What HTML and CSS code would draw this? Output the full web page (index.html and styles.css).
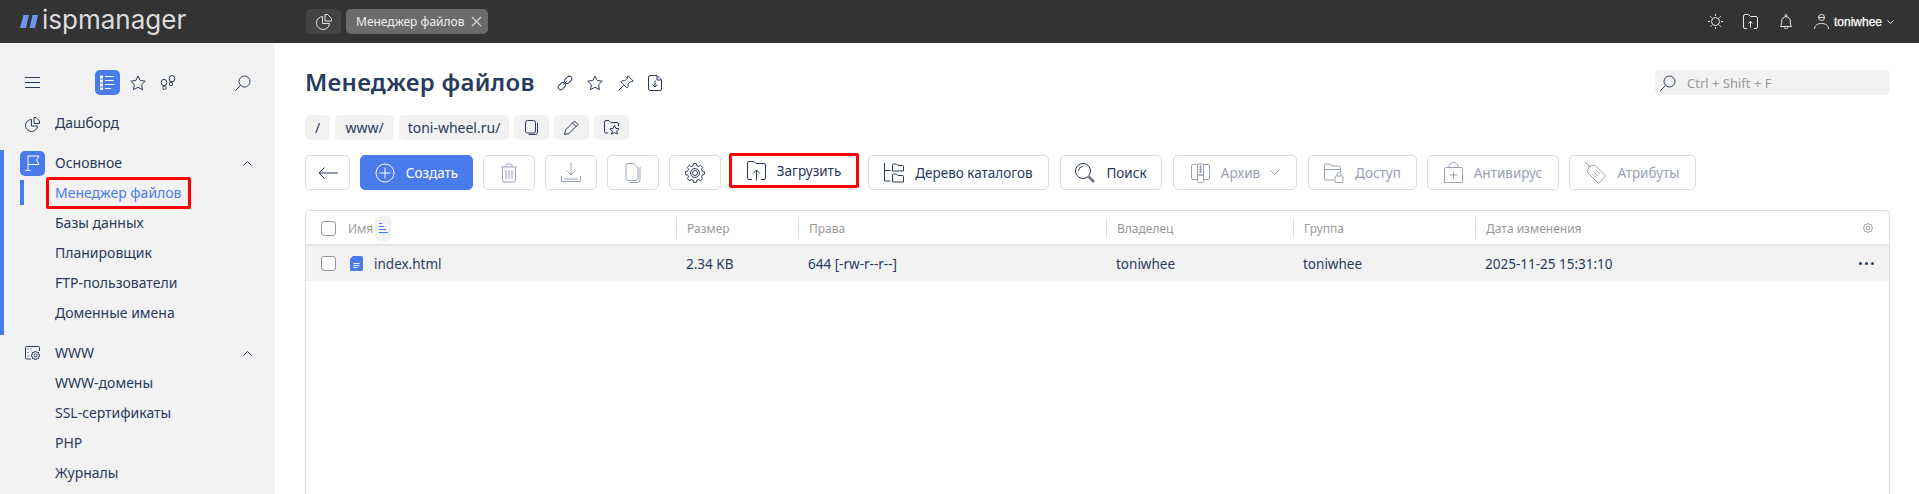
FILE: index.html
```html
<!DOCTYPE html>
<html lang="ru">
<head>
<meta charset="utf-8">
<title>ispmanager</title>
<link rel="stylesheet" href="styles.css">
</head>
<body>
<svg class="sprite" width="0" height="0">
  <symbol id="cog" viewBox="-10 -10 20 20"><path d="M-1.94-7.24L-1.49-9.38H1.49L1.94-7.24L3.75-6.49L5.58-7.69L7.69-5.58L6.49-3.75L7.24-1.94L9.38-1.49V1.49L7.24 1.94L6.49 3.75L7.69 5.58L5.58 7.69L3.75 6.49L1.94 7.24L1.49 9.38H-1.49L-1.94 7.24L-3.75 6.49L-5.58 7.69L-7.69 5.58L-6.49 3.75L-7.24 1.94L-9.38 1.49V-1.49L-7.24-1.94L-6.49-3.75L-7.69-5.58L-5.58-7.69L-3.75-6.49z" stroke-linejoin="round"/><circle r="4.500"/><circle r="2.500"/></symbol>
  <symbol id="cog-small" viewBox="-10 -10 20 20"><path d="M-1.94-7.24L-1.49-9.38H1.49L1.94-7.24L3.75-6.49L5.58-7.69L7.69-5.58L6.49-3.75L7.24-1.94L9.38-1.49V1.49L7.24 1.94L6.49 3.75L7.69 5.58L5.58 7.69L3.75 6.49L1.94 7.24L1.49 9.38H-1.49L-1.94 7.24L-3.75 6.49L-5.58 7.69L-7.69 5.58L-6.49 3.75L-7.24 1.94L-9.38 1.49V-1.49L-7.24-1.94L-6.49-3.75L-7.69-5.58L-5.58-7.69L-3.75-6.49z" stroke-linejoin="round"/><circle r="3.500"/></symbol>
</svg>
<header class="topbar">
  <div class="logo">
    <svg width="18" height="13" viewBox="0 0 18 13"><path d="M3.500 0H9L6 13H0zM12.500 0H18L15 13H9.500z" fill="#6d94f0"/></svg>
    <span class="logo-text">ispmanager</span>
  </div>
  <div class="tabs">
    <span class="tab-icon"><svg width="16" height="16" viewBox="0 0 16 16" fill="none" stroke="#e8e8e8"><path d="M6.500 2.500a6.500 6.500 0 1 0 7 7H6.500z"/><path d="M9 .5h2.500l4 4v2.500H9z"/></svg></span>
    <span class="tab">Менеджер файлов <svg width="11" height="11" viewBox="0 0 11 11" stroke="#d8d8d8" stroke-width="1.100"><path d="M1 1l9 9M10 1l-9 9"/></svg></span>
  </div>
  <div class="top-actions">
    <svg class="sun" width="15" height="15" viewBox="0 0 15 15" fill="none" stroke="#e8e8e8"><circle cx="7.500" cy="7.500" r="4"/><path d="M7.500 0v2M7.500 13v2M0 7.500h2M13 7.500h2M2.200 2.200l1.400 1.400M11.400 11.400l1.400 1.400M12.800 2.200l-1.400 1.400M3.600 11.400l-1.400 1.400"/></svg>
    <svg width="15" height="15" viewBox="0 0 15 15" fill="none" stroke="#e8e8e8"><path d="M4 14.500H2A1.500 1.500 0 0 1 .5 13V2A1.500 1.500 0 0 1 2 .5h3.500l2 2H13A1.500 1.500 0 0 1 14.500 4v9a1.500 1.500 0 0 1-1.500 1.500h-2"/><path d="M7.500 13.500V7.500M5.500 9.500l2-2 2 2"/></svg>
    <svg width="12" height="15" viewBox="0 0 12 15" fill="none" stroke="#e8e8e8"><path d="M.5 12.500c1-1.500 1.200-3 1.200-5.500a4.300 4.300 0 0 1 8.600 0c0 2.500.2 4 1.200 5.500z"/><circle cx="6" cy="1.500" r="1"/><path d="M4.500 13.500a1.500 1.500 0 0 0 3 0"/></svg>
    <div class="user">
      <svg width="15" height="15" viewBox="0 0 15 15" fill="none" stroke="#e8e8e8"><circle cx="7.500" cy="3.500" r="3"/><path d="M4.500 3.500h6M.5 15c.3-3.800 3-5.500 7-5.500s6.700 1.700 7 5.500"/></svg>
      <span class="user-name">toniwhee</span>
      <svg width="7" height="4" viewBox="0 0 7 4" fill="none" stroke="#e8e8e8"><path d="M.5.500L3.500 3.500 6.500.500"/></svg>
    </div>
  </div>
</header>

<div class="layout">
  <aside class="sidebar">
    <div class="side-tools">
      <svg width="15" height="11" viewBox="0 0 15 11" stroke="#2a3a5c"><path d="M0 .5h15M0 5.500h15M0 10.500h15"/></svg>
      <span class="tool-active"><svg width="15" height="15" viewBox="0 0 15 15" fill="none" stroke="#fff"><path d="M5 1.500h9M5 5.500h9M5 9.500h9.500M5 13.500h6"/><rect x=".5" y="1" width="2" height="2"/><rect x=".5" y="5" width="2" height="2"/><rect x=".5" y="9" width="2" height="2"/><rect x=".5" y="13" width="2" height="1.500"/></svg></span>
      <svg class="tool-star" width="16" height="15" viewBox="0 0 16 15" fill="none" stroke="#2a3a5c"><path d="M8 1l2.200 4.500 5 .7-3.600 3.500.9 5L8 12.300 3.500 14.700l.9-5L.8 6.200l5-.7z"/></svg>
      <svg class="tool-steps" width="16" height="15" viewBox="0 0 16 15" fill="none" stroke="#2a3a5c"><ellipse cx="4" cy="7.500" rx="2.800" ry="3.200"/><ellipse cx="4.500" cy="12.800" rx="1.700" ry="1.700"/><ellipse cx="12" cy="3.700" rx="2.800" ry="3.200"/><ellipse cx="11" cy="9" rx="1.700" ry="1.700"/></svg>
      <svg class="tool-search" width="16" height="16" viewBox="0 0 16 16" fill="none" stroke="#2a3a5c"><circle cx="9.500" cy="6.500" r="5.500"/><path d="M5.500 10.500L.5 15.500"/></svg>
    </div>
    <a class="nav-head nav-dash">
      <span class="nav-ico"><svg width="15" height="15" viewBox="0 0 15 15" fill="none" stroke="#2a3a5c"><path d="M6.500 2.500a6 6 0 1 0 6 6.500H6.500z"/><path d="M9 .5h2l3.500 3.500v2.500H9z"/></svg></span>
      <span class="nav-label">Дашборд</span>
    </a>
    <section class="nav-group is-open">
      <a class="nav-head">
        <span class="nav-ico nav-ico-on"><svg width="15" height="16" viewBox="0 0 15 16" fill="none" stroke="#fff"><path d="M3 15.500V.5M.5 15.500h5M3 1h11l-2.500 4L14 9.500H3"/></svg></span>
        <span class="nav-label">Основное</span>
        <svg class="chev" width="9" height="5" viewBox="0 0 9 5" fill="none" stroke="#2a3a5c"><path d="M.5 4.500l4-4 4 4"/></svg>
      </a>
      <a class="nav-item nav-current"><span class="nav-label">Менеджер файлов</span></a>
      <a class="nav-item"><span class="nav-label">Базы данных</span></a>
      <a class="nav-item"><span class="nav-label">Планировщик</span></a>
      <a class="nav-item"><span class="nav-label">FTP-пользователи</span></a>
      <a class="nav-item"><span class="nav-label">Доменные имена</span></a>
    </section>
    <section class="nav-group">
      <a class="nav-head">
        <span class="nav-ico"><svg width="15" height="14" viewBox="0 0 15 14" fill="none" stroke="#2a3a5c"><path d="M6 13H1.500A1 1 0 0 1 .5 12V1.500a1 1 0 0 1 1-1h12a1 1 0 0 1 1 1V5M2.500 3h1M5.500 3h1M2.500 6.500h1M2.500 10h1"/><svg x="6" y="5" width="9" height="9" stroke-width="2.200"><use href="#cog-small"/></svg></svg></span>
        <span class="nav-label">WWW</span>
        <svg class="chev" width="9" height="5" viewBox="0 0 9 5" fill="none" stroke="#2a3a5c"><path d="M.5 4.500l4-4 4 4"/></svg>
      </a>
      <a class="nav-item"><span class="nav-label">WWW-домены</span></a>
      <a class="nav-item"><span class="nav-label">SSL-сертификаты</span></a>
      <a class="nav-item"><span class="nav-label">PHP</span></a>
      <a class="nav-item"><span class="nav-label">Журналы</span></a>
    </section>
  </aside>

  <main class="content">
    <div class="title-row">
      <h1>Менеджер файлов</h1>
      <div class="title-tools">
        <svg width="16" height="16" viewBox="0 0 16 16" fill="none" stroke="#2a3a5c"><rect x="-.5" y="5.500" width="8" height="5" rx="2.500" transform="rotate(-45 8 8)"/><rect x="8.500" y="5.500" width="8" height="5" rx="2.500" transform="rotate(-45 8 8)"/><path d="M6.500 9.500l3-3"/></svg>
        <svg width="16" height="15" viewBox="0 0 16 15" fill="none" stroke="#2a3a5c"><path d="M8 1l2.200 4.500 5 .7-3.600 3.500.9 5L8 12.300 3.500 14.700l.9-5L.8 6.200l5-.7z"/></svg>
        <svg width="16" height="16" viewBox="0 0 16 16" fill="none" stroke="#2a3a5c"><path d="M10 .8l5.200 5.200-1.500.8-1-.3-2.700 2.700.2 2.500-1.200 1.200-6-6 1.200-1.200 2.500.2 2.700-2.700-.3-1zM5.500 10.500l-5 5"/></svg>
        <svg width="14" height="16" viewBox="0 0 14 16" fill="none" stroke="#2a3a5c"><path d="M9 .5H2A1.500 1.500 0 0 0 .5 2v12A1.500 1.500 0 0 0 2 15.500h10a1.500 1.500 0 0 0 1.500-1.500V5zM9 .5V5h4.500M7 5.500v6.500M4.500 9.500L7 12l2.500-2.500"/></svg>
      </div>
      <div class="quick-search">
        <svg width="16" height="16" viewBox="0 0 16 16" fill="none" stroke="#2a3a5c"><circle cx="9.500" cy="6.500" r="5.500"/><path d="M5.500 10.500L.5 15.500"/></svg>
        <span>Ctrl + Shift + F</span>
      </div>
    </div>

    <div class="crumbs">
      <span class="crumb crumb-root">/</span>
      <span class="crumb crumb-www">www/</span>
      <span class="crumb crumb-site">toni-wheel.ru/</span>
      <span class="crumb crumb-ico"><svg width="14" height="15" viewBox="0 0 14 15" fill="none" stroke="#2a3a5c"><rect x=".5" y=".5" width="10" height="12.500" rx="2"/><path d="M12.500 2.500v9.500a2.500 2.500 0 0 1-2.500 2.500H3.500"/></svg></span>
      <span class="crumb crumb-ico"><svg width="15" height="15" viewBox="0 0 15 15" fill="none" stroke="#2a3a5c"><path d="M10.500 1l3.500 3.500-9 9-4.500 1 1-4.500zM8.500 3l3.500 3.500"/></svg></span>
      <span class="crumb crumb-ico"><svg width="16" height="15" viewBox="0 0 16 15" fill="none" stroke="#2a3a5c"><path d="M4 13H2A1.500 1.500 0 0 1 .5 11.500V2A1.500 1.500 0 0 1 2 .5h3L7 2.500h6A1.500 1.500 0 0 1 14.500 4v2"/><path d="M10.500 5.500l1.400 2.900 3.100.4-2.300 2.200.6 3.100-2.800-1.500-2.800 1.500.6-3.100L6 8.800l3.100-.4z"/></svg></span>
    </div>

    <div class="toolbar">
      <button class="btn btn-back"><svg width="20" height="12" viewBox="0 0 20 12" fill="none" stroke="#2a3a5c"><path d="M20 6H1M6.500.5L1 6l5.500 5.500"/></svg></button>
      <button class="btn btn-primary"><svg width="20" height="20" viewBox="0 0 20 20" fill="none" stroke="#fff"><circle cx="10" cy="10" r="9"/><path d="M10 4.500v11M4.500 10h11"/></svg><span>Создать</span></button>
      <button class="btn btn-ico btn-off"><svg width="16" height="20" viewBox="0 0 16 20" fill="none" stroke="#9aa1b5"><path d="M0 4h16M5 4V2.500A1.500 1.500 0 0 1 6.500 1h3A1.500 1.500 0 0 1 11 2.500V4M1.500 4.500v13A1.500 1.500 0 0 0 3 19h10a1.500 1.500 0 0 0 1.500-1.500v-13M5 7v9M8 7v9M11 7v9"/></svg></button>
      <button class="btn btn-ico btn-off"><svg width="20" height="20" viewBox="0 0 20 20" fill="none" stroke="#9aa1b5"><path d="M10 0v12M6 8l4 4 4-4M.5 13v5.500h19V13M3 16h14"/></svg></button>
      <button class="btn btn-ico btn-off"><svg width="16" height="20" viewBox="0 0 16 20" fill="none" stroke="#9aa1b5"><path d="M9 .5H3A2 2 0 0 0 1 2.500v13a2 2 0 0 0 2 2h8a2 2 0 0 0 2-2V5zM15 4v13a2.500 2.500 0 0 1-2.500 2.500H4"/></svg></button>
      <button class="btn btn-ico"><svg width="20" height="20" fill="none" stroke="#2a3a5c"><use href="#cog"/></svg></button>
      <button class="btn btn-upload"><svg width="19" height="20" viewBox="0 0 19 20" fill="none" stroke="#2a3a5c"><path d="M5 18.500H2A1.500 1.500 0 0 1 .5 17V2A1.500 1.500 0 0 1 2 .5h5l2 2h8A1.500 1.500 0 0 1 18.500 4v13a1.500 1.500 0 0 1-1.500 1.500h-3M9.500 19.500V9M6 12.500L9.500 9l3.500 3.500"/></svg><span>Загрузить</span></button>
      <button class="btn btn-tree"><svg width="20" height="20" viewBox="0 0 20 20" fill="none" stroke="#2a3a5c"><path d="M.5 0v18h6M.5 7.500h6"/><path d="M8.500 8V2a1 1 0 0 1 1-1h3l1.500 1.500h4.500a1 1 0 0 1 1 1V8zM8.500 19v-7a1 1 0 0 1 1-1h3l1.500 1.500h4.500a1 1 0 0 1 1 1V19z"/></svg><span>Дерево каталогов</span></button>
      <button class="btn btn-find"><svg width="20" height="20" viewBox="0 0 20 20" fill="none" stroke="#2a3a5c"><circle cx="8" cy="8" r="7.500"/><path d="M3.500 8a4.500 4.500 0 0 1 4.500-4.500"/><path d="M13.500 13.500l5.500 5.500" stroke="#6d7487" stroke-width="2.500"/></svg><span>Поиск</span></button>
      <button class="btn btn-arch btn-off"><svg width="19" height="20" viewBox="0 0 19 20" fill="none" stroke="#9aa1b5"><path d="M5 1.500H2A1.500 1.500 0 0 0 .5 3v12A1.500 1.500 0 0 0 2 16.500h4M13 1.500h4A1.500 1.500 0 0 1 18.500 3v12a1.500 1.500 0 0 1-1.500 1.500h-4M6.500 1h6v11h-6zM9.500 2v8M8 4h3M8 6.500h3M8 9h3"/><rect x="6.500" y="12" width="6" height="7.500" rx="1"/></svg><span>Архив</span><svg class="btn-chev" width="9" height="5" viewBox="0 0 9 5" fill="none" stroke="#9aa1b5"><path d="M.5.5l4 4 4-4"/></svg></button>
      <button class="btn btn-acc btn-off"><svg width="20" height="20" viewBox="0 0 20 20" fill="none" stroke="#9aa1b5"><path d="M10 17H2A1.500 1.500 0 0 1 .5 15.500V2.500A1.500 1.500 0 0 1 2 1h4l2 2h7a1.500 1.500 0 0 1 1.500 1.500V9M.5 6.500h16"/><rect x="11" y="13" width="8" height="6.500" rx="1"/><path d="M13 13v-1.500a2 2 0 0 1 4 0V13"/></svg><span>Доступ</span></button>
      <button class="btn btn-virus btn-off"><svg width="19" height="21" viewBox="0 0 19 21" fill="none" stroke="#9aa1b5"><path d="M1.500 5.500h16a1 1 0 0 1 1 1V20.500H.5V6.500a1 1 0 0 1 1-1zM5 5.500V4.500a4.500 4 0 0 1 9 0v1M9.500 9.500v7M6 13h7"/></svg><span>Антивирус</span></button>
      <button class="btn btn-attr btn-off"><svg width="21" height="22" viewBox="0 0 21 22" fill="none" stroke="#9aa1b5"><path d="M0 0l6 5.500M3.500 4.500l6-1.500 11 11-7 7.500L2.500 10.500z"/><path d="M9 10l4 4M11 8l4 4M7.500 12l3.500 3.500"/></svg><span>Атрибуты</span></button>
    </div>

    <div class="table">
      <div class="t-row t-head">
        <div class="cell c-name">
          <span class="check"></span>
          <span class="head-text">Имя</span>
          <span class="sort"><svg width="9" height="11" viewBox="0 0 9 11" fill="none" stroke="#4a7bec"><path d="M0 .5h3M0 3.500h5M0 6.500h7M0 9.500h9"/></svg></span>
        </div>
        <div class="cell c-size head-text">Размер</div>
        <div class="cell c-perm head-text">Права</div>
        <div class="cell c-own head-text">Владелец</div>
        <div class="cell c-grp head-text">Группа</div>
        <div class="cell c-date head-text">Дата изменения</div>
        <div class="cell c-end c-gear"><svg width="10" height="10" fill="none" stroke="#9a9a9a" stroke-width="2"><use href="#cog-small"/></svg></div>
      </div>
      <div class="t-row t-file">
        <div class="cell c-name">
          <span class="check"></span>
          <svg class="file-ico" width="13" height="15" viewBox="0 0 13 15"><path d="M3 0h8.500A1.500 1.500 0 0 1 13 1.500v12a1.500 1.500 0 0 1-1.500 1.500h-10A1.500 1.500 0 0 1 0 13.500V3z" fill="#4a7bec"/><path d="M3.500 7.500h6M3.500 9.500h6M3.500 11.500h4" stroke="#fff"/></svg>
          <span>index.html</span>
        </div>
        <div class="cell c-size">2.34 KB</div>
        <div class="cell c-perm">644 [-rw-r--r--]</div>
        <div class="cell c-own">toniwhee</div>
        <div class="cell c-grp">toniwhee</div>
        <div class="cell c-date">2025-11-25 15:31:10</div>
        <div class="cell c-end"><svg width="15" height="3" viewBox="0 0 15 3" fill="#2a3a5c"><circle cx="1.500" cy="1.500" r="1.500"/><circle cx="7.500" cy="1.500" r="1.500"/><circle cx="13.500" cy="1.500" r="1.500"/></svg></div>
      </div>
    </div>
  </main>
</div>
</body>
</html>
```

FILE: styles.css
```css
*, *::before, *::after { box-sizing: border-box; }
html, body { margin: 0; height: 494px; overflow: hidden; }
body { font-family: "Noto Sans", "Open Sans", sans-serif; font-size: 14px; color: #2a3a5c; background: #fff; }
svg { display: block; flex: none; }
.sprite { position: absolute; }

.topbar { height: 43px; background: #333; display: flex; align-items: center; }
.logo { width: 306px; padding-left: 20px; display: flex; align-items: center; gap: 4px; }
.logo-text { font-family: "Inter", sans-serif; font-size: 26px; line-height: 30px; color: #dcdcdc; margin-top: -3px; }
.tabs { display: flex; gap: 5px; }
.tab-icon { width: 35px; height: 25px; border-radius: 5px; background: #444; display: flex; align-items: center; justify-content: center; }
.tab { width: 142px; height: 25px; border-radius: 5px; background: #6b6b6b; color: #f0f0f0; font-size: 12px; display: flex; align-items: center; justify-content: space-between; padding: 0 6px 0 10px; }
.top-actions { margin-left: auto; padding-right: 25px; display: flex; align-items: center; gap: 22px; }
.sun { margin-right: -2px; }
.user { display: flex; align-items: center; gap: 5px; }
.user-name { font-family: "Liberation Sans", sans-serif; font-size: 12px; color: #fff; -webkit-text-stroke: .25px #fff; }

.layout { display: flex; height: 451px; }
.sidebar { width: 275px; flex: none; background: #f2f2f2; padding-top: 27px; }
.side-tools { height: 25px; margin-bottom: 14px; padding-left: 25px; display: flex; align-items: center; }
.tool-active { margin-left: 55px; width: 25px; height: 25px; border-radius: 5px; background: #4a7bec; display: flex; align-items: center; justify-content: center; }
.tool-star { margin-left: 10px; }
.tool-steps { margin-left: 14px; }
.tool-search { margin-left: 59px; }
.nav-head { height: 30px; display: flex; align-items: center; padding-left: 20px; }
.nav-label { padding-bottom: 2px; }
.nav-dash .nav-label { padding-bottom: 3px; }
.nav-ico { width: 25px; height: 25px; border-radius: 5px; display: flex; align-items: center; justify-content: center; margin-right: 10px; }
.nav-ico-on { background: #4a7bec; }
.chev { margin-left: auto; margin-right: 23px; }
.nav-group { position: relative; padding-bottom: 10px; margin-top: 9px; }
.nav-group + .nav-group { margin-top: 0; }
.nav-group.is-open::before { content: ""; position: absolute; left: 0; top: 2px; bottom: 3px; width: 4px; background: #4a7bec; }
.nav-item { height: 30px; display: flex; align-items: center; padding-left: 55px; position: relative; }
.nav-current { color: #4a7bec; }
.nav-current::before { content: ""; position: absolute; left: 20px; top: 2px; width: 4px; height: 25px; background: #4a7bec; }
.nav-current::after { content: ""; position: absolute; left: 46px; top: -1px; width: 145px; height: 32px; border: 3px solid #f00; border-radius: 2px; }

.content { flex: 1; padding: 27px 29px 0 30px; min-width: 0; }
.title-row { height: 25px; display: flex; align-items: center; margin-bottom: 20px; }
h1 { margin: 0; font-size: 24px; font-weight: 600; line-height: 25px; letter-spacing: .25px; padding-bottom: 2px; }
.title-tools { margin-left: 22px; display: flex; align-items: center; gap: 14.500px; }
.quick-search { margin-left: auto; width: 235px; height: 25px; border-radius: 5px; background: #f2f2f2; display: flex; align-items: center; gap: 11px; padding-left: 5px; color: #9a9a9a; font-size: 13px; }

.crumbs { display: flex; gap: 5px; height: 25px; margin-bottom: 15px; }
.crumb { height: 25px; border-radius: 5px; background: #f2f2f2; display: flex; align-items: center; justify-content: center; }
.crumb-root { width: 25px; }
.crumb-www { width: 59px; }
.crumb-site { width: 110px; }
.crumb-ico { width: 35px; }

.toolbar { display: flex; gap: 10px; height: 35px; margin-bottom: 20px; }
.btn { height: 35px; border: 1px solid #ddd; border-radius: 5px; background: #fff; color: #2a3a5c; font: inherit; font-size: 13.500px; display: flex; align-items: center; justify-content: center; gap: 11px; padding: 0; }
.btn-back { width: 45px; }
.btn-primary { width: 113px; background: #4a7bec; border-color: #4a7bec; color: #fff; }
.btn-ico { width: 52px; }
.btn-off { color: #9aa1b5; }
.btn-upload { width: 130px; margin: -2px 0 0 -2px; border: 3px solid #f00; border-radius: 2px; }
.btn-tree { width: 181px; margin-left: -1px; }
.btn-find { width: 102px; margin-left: 1px; }
.btn-arch { width: 124px; margin-left: 1px; }
.btn-acc { width: 109px; margin-left: 1px; }
.btn-virus { width: 132px; }
.btn-attr { width: 127px; }
.btn-chev { margin-left: -1px; }

.table { height: 284px; border: 1px solid #ddd; border-bottom: 0; border-radius: 5px 5px 0 0; }
.t-row { display: grid; grid-template-columns: 370px 122px 308px 187px 182px 1fr 60px; align-items: center; }
.t-head { height: 35px; padding-top: 1px; border-bottom: 2px solid #e4e4e4; }
.t-file { height: 35px; background: #f2f2f2; font-size: 13.500px; }
.cell { display: flex; align-items: center; height: 20px; padding-left: 10px; }
.t-head .cell + .cell:not(.c-end) { border-left: 1px solid #ddd; }
.c-name { padding-left: 15px; }
.c-end { justify-content: flex-end; padding-right: 15px; }
.c-gear { padding-right: 16px; }
.head-text { color: #9a9a9a; font-size: 12px; }
.check { width: 15px; height: 15px; border: 1px solid #999; border-radius: 3px; background: #fff; margin-right: 12px; }
.sort { width: 16px; height: 25px; border-radius: 5px; background: #f2f2f2; display: flex; align-items: center; justify-content: center; margin-left: 2px; }
.file-ico { margin-right: 11px; margin-left: 2px; }
```
